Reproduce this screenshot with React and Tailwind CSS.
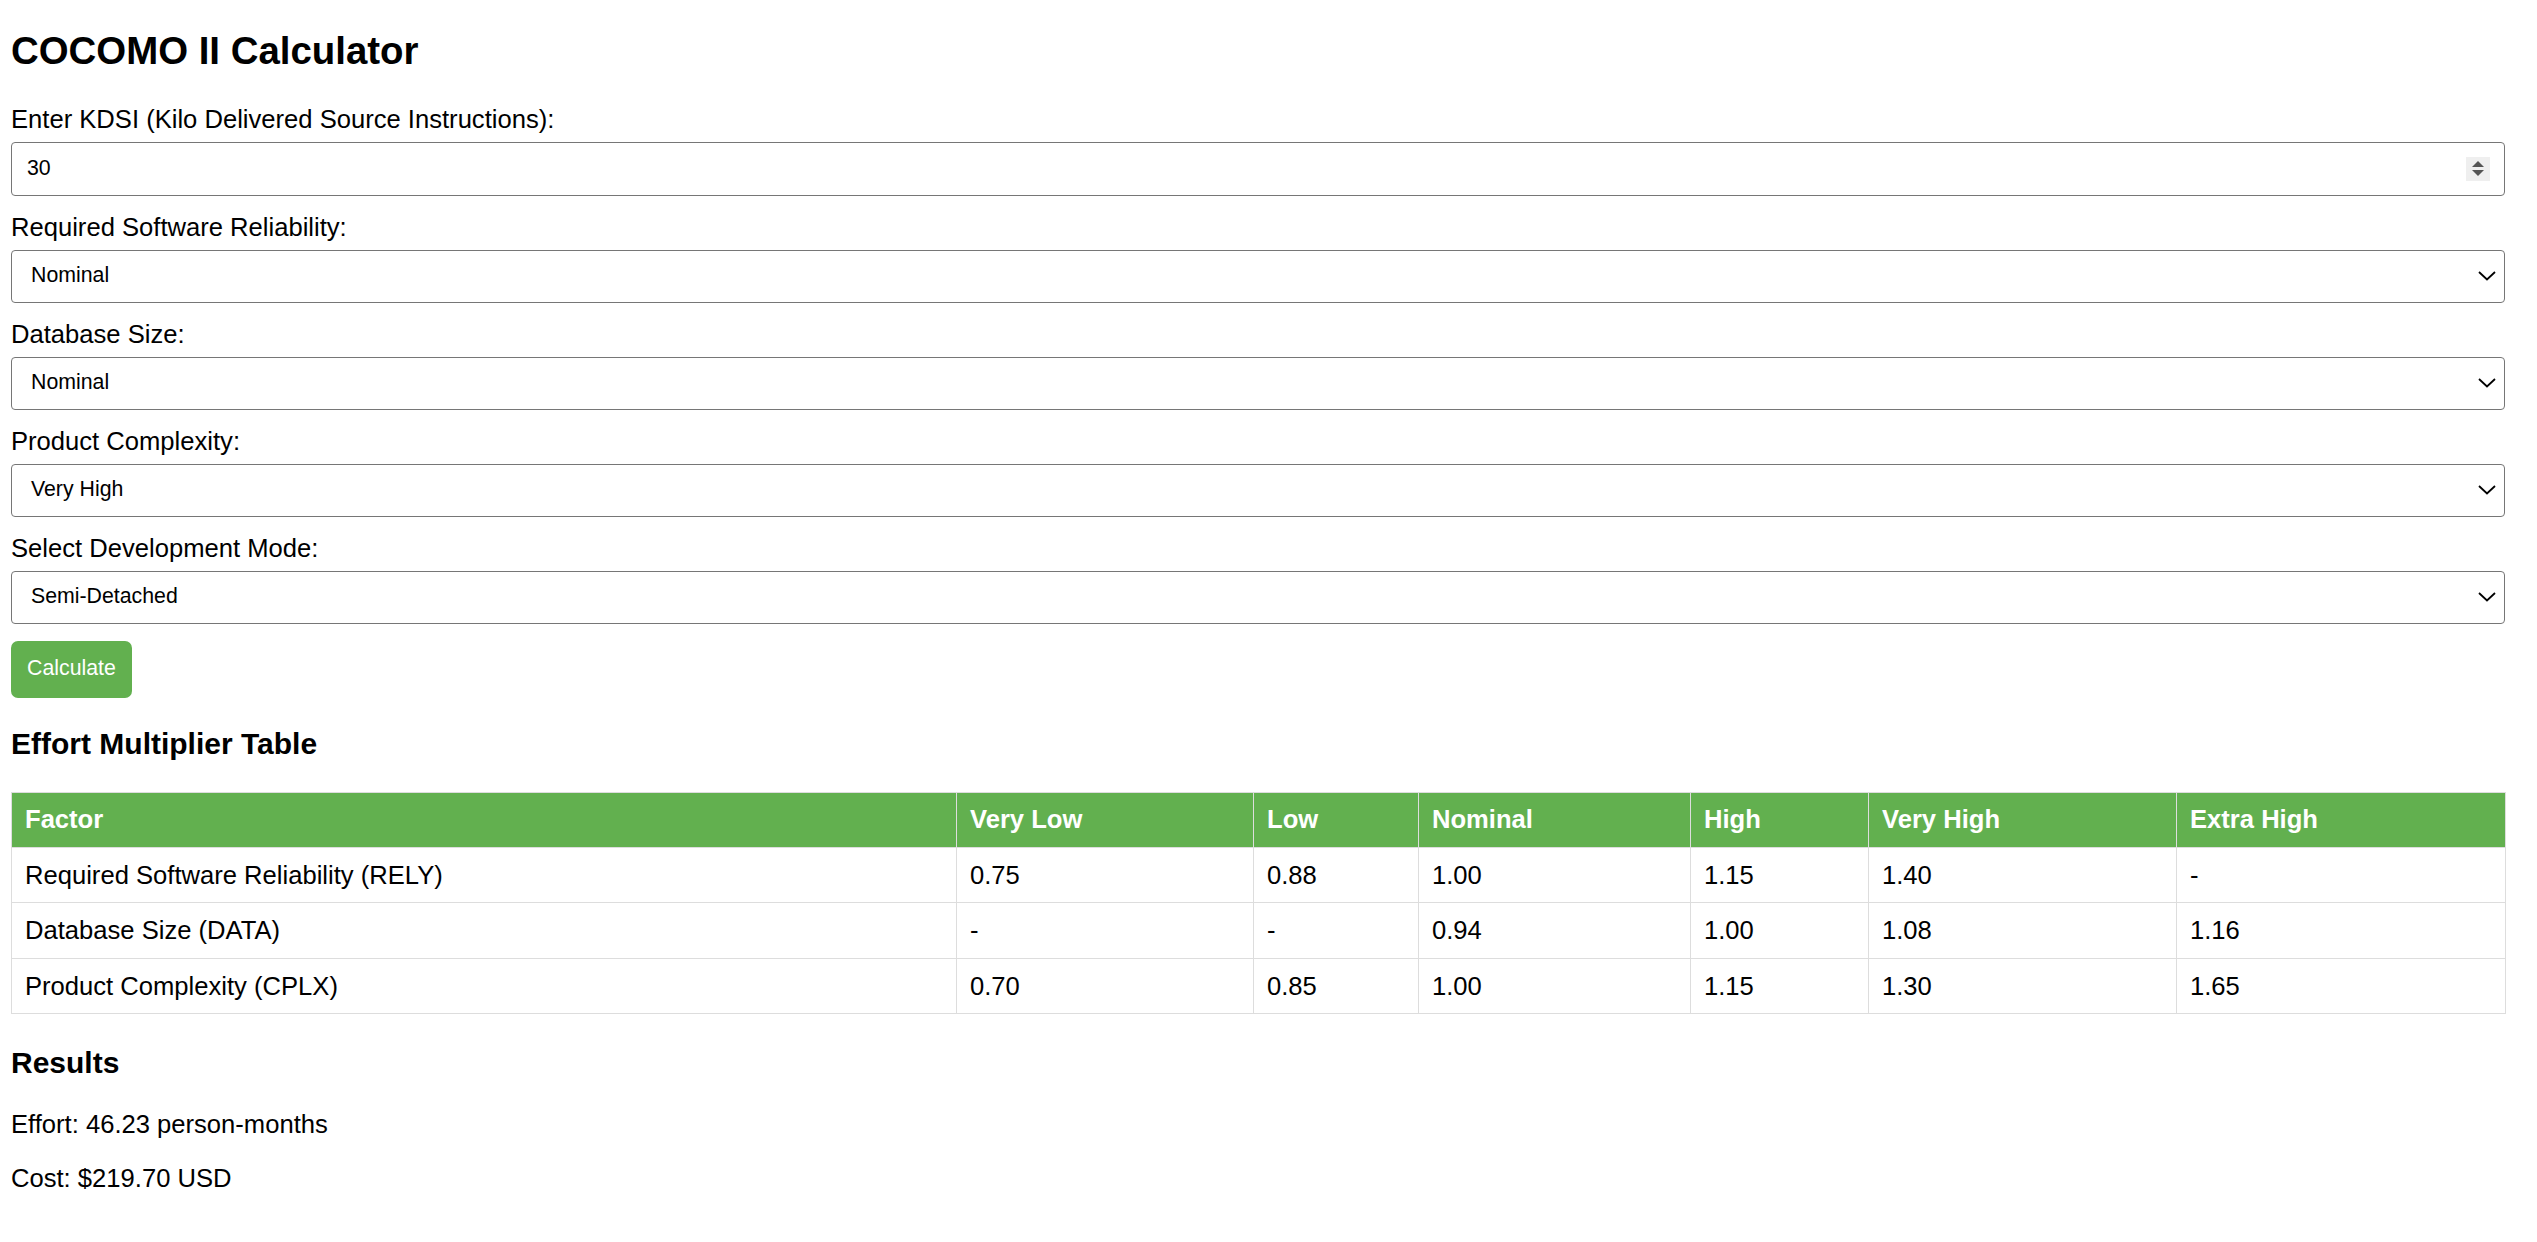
import React from 'react';

const rows = [
  { factor: 'Required Software Reliability (RELY)', values: ['0.75', '0.88', '1.00', '1.15', '1.40', '-'] },
  { factor: 'Database Size (DATA)', values: ['-', '-', '0.94', '1.00', '1.08', '1.16'] },
  { factor: 'Product Complexity (CPLX)', values: ['0.70', '0.85', '1.00', '1.15', '1.30', '1.65'] },
];

const headers = ['Factor', 'Very Low', 'Low', 'Nominal', 'High', 'Very High', 'Extra High'];
const colWidths = [945, 297, 165, 272, 178, 308, 329];

const Chevron = () => (
  <svg width="18" height="10" viewBox="0 0 18 10" fill="none">
    <polyline points="1,1 9,8.5 17,1" stroke="#000" strokeWidth="1.8" strokeLinejoin="miter" />
  </svg>
);

const Spinner = () => (
  <div className="w-[24px] h-[24px] bg-[#efefef] flex items-center justify-center">
    <svg width="12" height="15" viewBox="0 0 12 15">
      <polygon points="6,0 12,6 0,6" fill="#555" />
      <polygon points="0,9 12,9 6,15" fill="#555" />
    </svg>
  </div>
);

const SelectBox = ({ value, last }) => (
  <div className={`h-[53px] ${last ? '' : 'mb-[17.5px]'} border border-[#767676] rounded-[4px] flex items-center justify-between pl-[19px] pr-[8px] text-[21.3px] bg-white`}>
    <span>{value}</span>
    <Chevron />
  </div>
);

const Label = ({ children }) => (
  <div className="text-[25.6px] leading-[28px] mb-[8.5px]">{children}</div>
);

const App = () => {
  return (
    <div className="min-h-screen bg-white text-black pl-[11px] pr-[32px] pt-[30px] pb-[40px] font-['Liberation_Sans',Arial,sans-serif]">
      <h2 className="text-[38.4px] leading-[41px] font-bold mb-[34px]">COCOMO II Calculator</h2>

      <Label>Enter KDSI (Kilo Delivered Source Instructions):</Label>
      <div className="h-[54px] mb-[17.5px] border border-[#767676] rounded-[4px] flex items-center justify-between pl-[15px] pr-[14px] text-[21.3px] bg-white">
        <span>30</span>
        <Spinner />
      </div>

      <Label>Required Software Reliability:</Label>
      <SelectBox value="Nominal" />

      <Label>Database Size:</Label>
      <SelectBox value="Nominal" />

      <Label>Product Complexity:</Label>
      <SelectBox value="Very High" />

      <Label>Select Development Mode:</Label>
      <SelectBox value="Semi-Detached" last />

      <button className="mt-[17px] w-[121px] h-[57px] rounded-[7px] bg-[#62b04f] text-white text-[21.3px] flex items-center justify-center">
        Calculate
      </button>

      <h3 className="mt-[30px] text-[30px] leading-[32px] font-bold mb-[32px]">Effort Multiplier Table</h3>

      <table className="w-[2494px] table-fixed border-collapse text-[25.6px]">
        <colgroup>
          {colWidths.map((w, i) => (
            <col key={i} style={{ width: w }} />
          ))}
        </colgroup>
        <thead>
          <tr className="bg-[#62b04f] text-white">
            {headers.map((h) => (
              <th key={h} className="h-[55px] border border-[#dddddd] text-left font-bold pl-[13px]">
                {h}
              </th>
            ))}
          </tr>
        </thead>
        <tbody>
          {rows.map((row) => (
            <tr key={row.factor}>
              <td className="h-[55.5px] border border-[#dddddd] pl-[13px]">{row.factor}</td>
              {row.values.map((v, i) => (
                <td key={i} className="h-[55.5px] border border-[#dddddd] pl-[13px]">{v}</td>
              ))}
            </tr>
          ))}
        </tbody>
      </table>

      <h3 className="mt-[33px] text-[30px] leading-[32px] font-bold">Results</h3>
      <p className="mt-[31px] text-[25.6px] leading-[28px]">Effort: 46.23 person-months</p>
      <p className="mt-[26px] text-[25.6px] leading-[28px]">Cost: $219.70 USD</p>
    </div>
  );
};

export default App;
